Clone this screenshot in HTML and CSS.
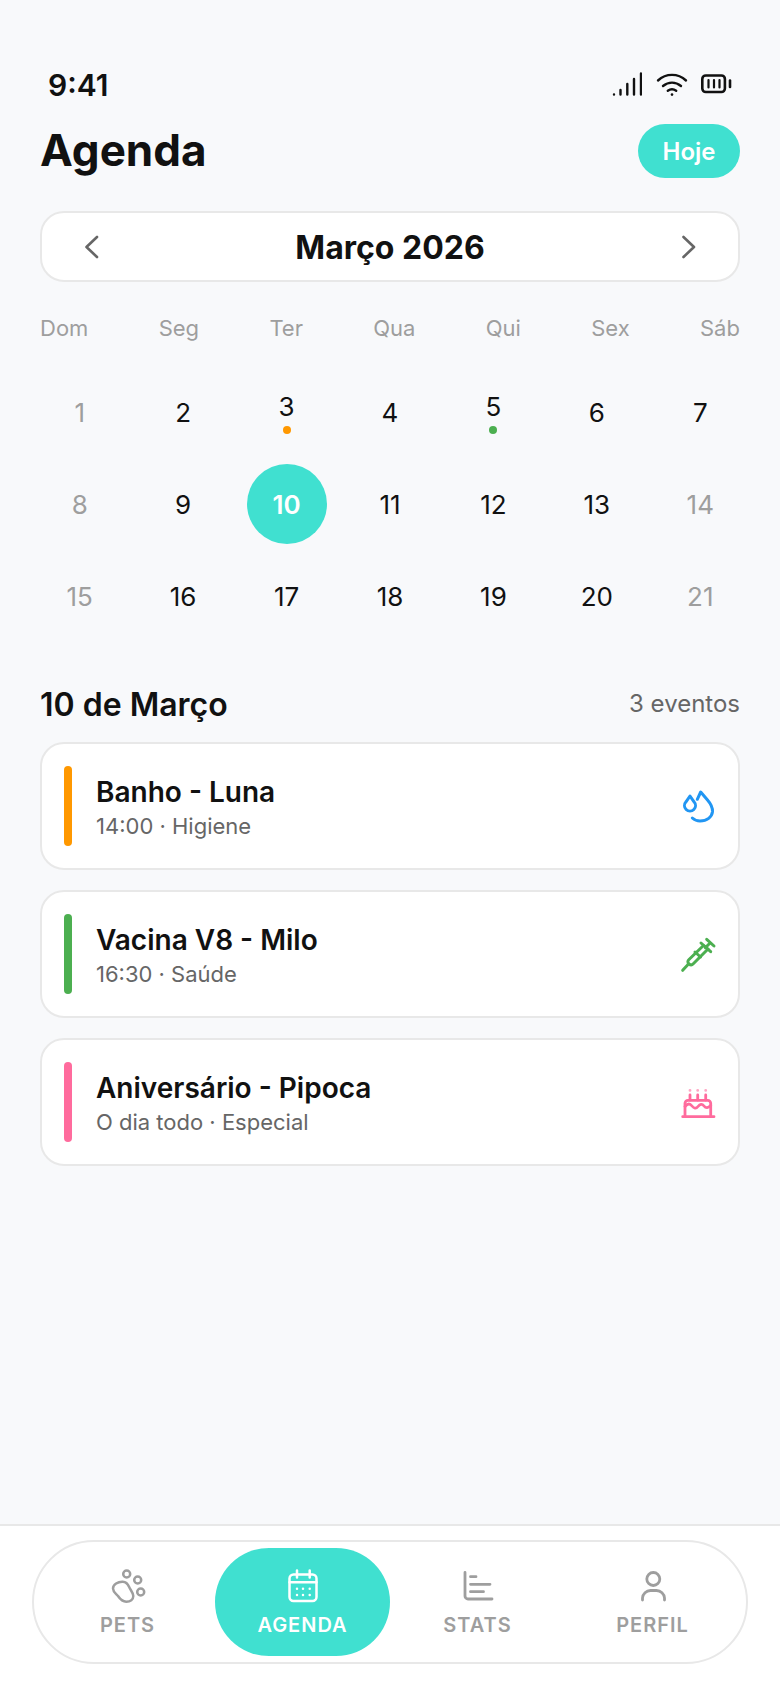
FILE: index.html
```html
<!DOCTYPE html>
<html lang="pt-BR">
<head>
  <meta charset="UTF-8" />
  <meta name="viewport" content="width=device-width, initial-scale=1.0"/>
  <title>Agenda</title>
  <link rel="stylesheet" href="styles.css">
</head>
<body>
  <main class="page">
    <!-- Status bar -->
    <div class="status">
      <span class="status-time">9:41</span>
      <div class="status-icons">
        <svg class="ic-signal" viewBox="0 0 30 24" fill="none" stroke="#111" stroke-width="2.400" stroke-linecap="round">
          <path d="M2 22.500v.1M8.500 18v4.500M15.300 12v10.500M22 7v15.500M29 1.500v21"/>
        </svg>
        <svg class="ic-wifi" viewBox="0 0 32 24" fill="none" stroke="#111" stroke-width="2.400" stroke-linecap="round">
          <path d="M2 8.500C10 1 22 1 30 8.500M7 14c5.500-4.500 12.500-4.500 18 0M11.800 18.800c2.500-1.800 5.900-1.800 8.400 0"/>
          <circle cx="16" cy="22.600" r="1.300" fill="#111" stroke="none"/>
        </svg>
        <svg class="ic-battery" viewBox="0 0 32 20" fill="none" stroke="#111" stroke-linecap="round">
          <rect x="1.300" y="1.500" width="22.600" height="16.500" rx="3.500" stroke-width="2.600"/>
          <path d="M7.500 6v7.500M13 6v7.500M18.500 6v7.500" stroke-width="2.200"/>
          <path d="M29 6.500v6.500" stroke-width="2.600"/>
        </svg>
      </div>
    </div>

    <header class="top">
      <h1>Agenda</h1>
      <button class="today">Hoje</button>
    </header>

    <div class="month-bar">
      <svg class="chev" viewBox="0 0 16 24" fill="none" stroke="#666" stroke-width="2.600" stroke-linecap="round" stroke-linejoin="round"><path d="M14 2L3.500 12 14 22"/></svg>
      <span class="month-name">Março 2026</span>
      <svg class="chev" viewBox="0 0 16 24" fill="none" stroke="#666" stroke-width="2.600" stroke-linecap="round" stroke-linejoin="round"><path d="M2.500 2L13 12 2.500 22"/></svg>
    </div>

    <div class="weekdays">
      <span>Dom</span><span>Seg</span><span>Ter</span><span>Qua</span><span>Qui</span><span>Sex</span><span>Sáb</span>
    </div>

    <div class="days">
      <div class="day muted"><span class="num">1</span></div>
      <div class="day"><span class="num">2</span></div>
      <div class="day"><span class="num">3</span><i class="dot orange"></i></div>
      <div class="day"><span class="num">4</span></div>
      <div class="day"><span class="num">5</span><i class="dot green"></i></div>
      <div class="day"><span class="num">6</span></div>
      <div class="day"><span class="num">7</span></div>
      <div class="day muted"><span class="num">8</span></div>
      <div class="day"><span class="num">9</span></div>
      <div class="day selected"><span class="num">10</span></div>
      <div class="day"><span class="num">11</span></div>
      <div class="day"><span class="num">12</span></div>
      <div class="day"><span class="num">13</span></div>
      <div class="day muted"><span class="num">14</span></div>
      <div class="day muted"><span class="num">15</span></div>
      <div class="day"><span class="num">16</span></div>
      <div class="day"><span class="num">17</span></div>
      <div class="day"><span class="num">18</span></div>
      <div class="day"><span class="num">19</span></div>
      <div class="day"><span class="num">20</span></div>
      <div class="day muted"><span class="num">21</span></div>
    </div>

    <div class="section-head">
      <h2>10 de Março</h2>
      <span class="count">3 eventos</span>
    </div>

    <!-- Events -->
    <div class="events">
      <article class="event">
        <span class="bar orange"></span>
        <div class="event-text">
          <h3>Banho - Luna</h3>
          <p>14:00 · Higiene</p>
        </div>
        <svg class="event-icon" viewBox="0 0 40 40" fill="none" stroke="#2196f3" stroke-width="3" stroke-linecap="round" stroke-linejoin="round">
          <path d="M10 10L6 15.800A5.500 5.500 0 1 0 14 15.800Z"/>
          <path d="M17.300 13.300L20.700 6l6.800 8c3.500 4 5.200 8 5 11.700C32 31 27 35 20 35c-3 0-5.500-1-7.700-3"/>
        </svg>
      </article>

      <article class="event">
        <span class="bar green"></span>
        <div class="event-text">
          <h3>Vacina V8 - Milo</h3>
          <p>16:30 · Saúde</p>
        </div>
        <svg class="event-icon" viewBox="0 0 40 40" fill="none" stroke="#4caf50" stroke-width="3" stroke-linecap="round" stroke-linejoin="round">
          <path d="M26.700 5.300L34 12M30.300 8.700l-5 5M21 9l9.700 8.700"/>
          <path d="M23.500 11.500L9 25.500c-1.500 1.500-1.500 3 0 4.300 1.400 1.300 3 1.300 4.300 0L28 15"/>
          <path d="M15 18l5.500 5M8.500 30L2.700 36.300"/>
        </svg>
      </article>

      <article class="event">
        <span class="bar pink"></span>
        <div class="event-text">
          <h3>Aniversário - Pipoca</h3>
          <p>O dia todo · Especial</p>
        </div>
        <svg class="event-icon" viewBox="0 0 40 40" fill="none" stroke="#ff6b9d" stroke-width="2.800" stroke-linecap="round" stroke-linejoin="round">
          <path d="M2.700 34.700H34M5 34.700V21.300a3 3 0 0 1 3-3h19.700a3 3 0 0 1 3 3v13.400"/>
          <path d="M5 24.500c3-3.500 5-3 7-.5s4 3 6 .5 4-3 6-.5 4 2 6.700-.5"/>
          <path d="M10 13v5M17.700 13v5M25.700 13v5"/>
          <path d="M10 8.300v.1M17.700 8.300v.1M25.700 8.300v.1" stroke-opacity=".6"/>
        </svg>
      </article>
    </div>
  </main>

  <!-- Bottom tabs -->
  <nav class="tabbar">
    <div class="tabs">
      <a class="tab">
        <svg viewBox="0 0 36 36" fill="none" stroke="currentColor" stroke-width="2.500" stroke-linecap="round" stroke-linejoin="round">
          <circle cx="16.700" cy="6" r="3.500"/>
          <circle cx="27.700" cy="12" r="3.500"/>
          <circle cx="30.700" cy="24" r="3.500"/>
          <path d="M3 20.500C3 16.500 8 13.500 12.700 13.700c3 .2 5 1.800 6.300 5 1 2.800 4.300 6 4.300 9.300 0 3.500-3 5.700-7 5.700-3.500 0-5.800-2-8.300-5.700C6 25.500 3 24 3 20.500z"/>
        </svg>
        <span>PETS</span>
      </a>
      <a class="tab active">
        <svg viewBox="0 0 36 36" fill="none" stroke="currentColor" stroke-width="2.500" stroke-linecap="round" stroke-linejoin="round">
          <rect x="4.500" y="6.500" width="27" height="26.500" rx="4"/>
          <path d="M12 2.500v7M24.700 2.500v7M4.500 14.300h27"/>
          <path d="M12 20.700v.1M18 20.700v.1M24.700 20.700v.1M12 27v.1M18 27v.1M24.700 27v.1"/>
        </svg>
        <span>AGENDA</span>
      </a>
      <a class="tab">
        <svg viewBox="0 0 36 36" fill="none" stroke="currentColor" stroke-width="2.800" stroke-linecap="round" stroke-linejoin="round">
          <path d="M5 4.500V28a3 3 0 0 0 3 3h24"/>
          <path d="M10.500 8.700h5.500M10.500 16.300h19.500M10.500 23.700h13"/>
        </svg>
        <span>STATS</span>
      </a>
      <a class="tab">
        <svg viewBox="0 0 36 36" fill="none" stroke="currentColor" stroke-width="2.800" stroke-linecap="round" stroke-linejoin="round">
          <circle cx="18.300" cy="11" r="6.500"/>
          <path d="M7.500 32v-2a8 8 0 0 1 8-7.500h6a8 8 0 0 1 8 7.500v2"/>
        </svg>
        <span>PERFIL</span>
      </a>
    </div>
  </nav>
</body>
</html>
```

FILE: styles.css
```css
* {
  margin: 0;
  padding: 0;
  box-sizing: border-box;
}

body {
  font-family: Inter, "Liberation Sans", sans-serif;
  background: #f8f9fb;
  color: #111;
  width: 780px;
  height: 1688px;
  display: flex;
  flex-direction: column;
  overflow: hidden;
}

.page {
  flex: 1;
  padding: 66px 40px 0;
}

/* Status bar */
.status {
  height: 38px;
  display: flex;
  align-items: center;
  justify-content: space-between;
  padding-left: 8px;
}

.status-time {
  font-size: 30px;
  font-weight: 600;
}

.status-icons {
  display: flex;
  align-items: flex-start;
  padding: 0 7px 2px 0;
}

.ic-signal {
  width: 30px;
  height: 24px;
}

.ic-wifi {
  width: 32px;
  height: 24px;
  margin-left: 14px;
}

.ic-battery {
  width: 32px;
  height: 20px;
  margin-left: 13px;
  margin-top: 2px;
}

/* Header */
.top {
  margin-top: 20px;
  height: 54px;
  display: flex;
  align-items: center;
  justify-content: space-between;
}

h1 {
  font-size: 44px;
  font-weight: 700;
  margin-bottom: 2px;
}

.today {
  width: 102px;
  height: 54px;
  border: none;
  border-radius: 27px;
  background: #40e0d0;
  color: #fff;
  font: 600 24px Inter, sans-serif;
}

/* Month */
.month-bar {
  margin-top: 33px;
  height: 71px;
  background: #fff;
  border: 2px solid #e8e8e8;
  border-radius: 24px;
  display: flex;
  align-items: center;
  justify-content: space-between;
  padding: 0 41px;
}

.chev {
  width: 16px;
  height: 24px;
}

.month-name {
  font-size: 32px;
  font-weight: 700;
  margin-top: 2px;
}

.weekdays {
  margin-top: 34px;
  display: flex;
  justify-content: space-between;
  color: #9e9e9e;
  font-size: 22px;
  line-height: 24px;
}

.days {
  margin: 26px -12px 0;
  display: grid;
  grid-template-columns: repeat(7, 1fr);
  grid-auto-rows: 92px;
}

.day {
  display: flex;
  flex-direction: column;
  align-items: center;
  justify-content: center;
  padding-top: 2px;
  font-size: 26px;
}

.day .num {
  line-height: 30px;
}

.day.muted {
  color: #9e9e9e;
}

.day.selected {
  padding-top: 0;
}

.day.selected .num {
  width: 80px;
  height: 80px;
  border-radius: 50%;
  background: #40e0d0;
  color: #fff;
  font-weight: 600;
  display: flex;
  align-items: center;
  justify-content: center;
  padding-top: 2px;
}

.dot {
  width: 8px;
  height: 8px;
  border-radius: 50%;
  margin-top: 4px;
}

.orange {
  background: #ff9800;
}

.green {
  background: #4caf50;
}

.pink {
  background: #ff6b9d;
}

/* Events */
.section-head {
  margin-top: 43px;
  height: 36px;
  display: flex;
  align-items: center;
  justify-content: space-between;
}

h2 {
  font-size: 32px;
  font-weight: 600;
  margin-top: 2px;
}

.count {
  font-size: 24px;
  color: #666;
}

.events {
  margin-top: 21px;
  display: flex;
  flex-direction: column;
  gap: 20px;
}

.event {
  height: 128px;
  background: #fff;
  border: 2px solid #e8e8e8;
  border-radius: 24px;
  display: flex;
  align-items: center;
  padding: 0 18px 0 22px;
}

.bar {
  width: 8px;
  height: 80px;
  border-radius: 4px;
}

.event-text {
  flex: 1;
  margin-left: 24px;
  padding-top: 3px;
}

h3 {
  font-size: 28px;
  font-weight: 600;
  line-height: 34px;
}

.event-text p {
  font-size: 22px;
  color: #666;
  line-height: 28px;
  margin-top: 3px;
}

.event-icon {
  width: 40px;
  height: 40px;
}

/* Tabs */
.tabbar {
  height: 164px;
  background: #fff;
  border-top: 2px solid #e8e8e8;
  padding: 14px 32px 0;
}

.tabs {
  height: 124px;
  border: 2px solid #e8e8e8;
  border-radius: 62px;
  padding: 6px;
  display: grid;
  grid-template-columns: repeat(4, 1fr);
}

.tab {
  display: flex;
  flex-direction: column;
  align-items: center;
  padding-top: 20px;
  border-radius: 54px;
  color: #9e9e9e;
}

.tab svg {
  width: 36px;
  height: 36px;
}

.tab span {
  margin-top: 9px;
  font-size: 20px;
  font-weight: 600;
  line-height: 24px;
  letter-spacing: 1px;
}

.tab.active {
  background: #40e0d0;
  color: #fff;
}
```
